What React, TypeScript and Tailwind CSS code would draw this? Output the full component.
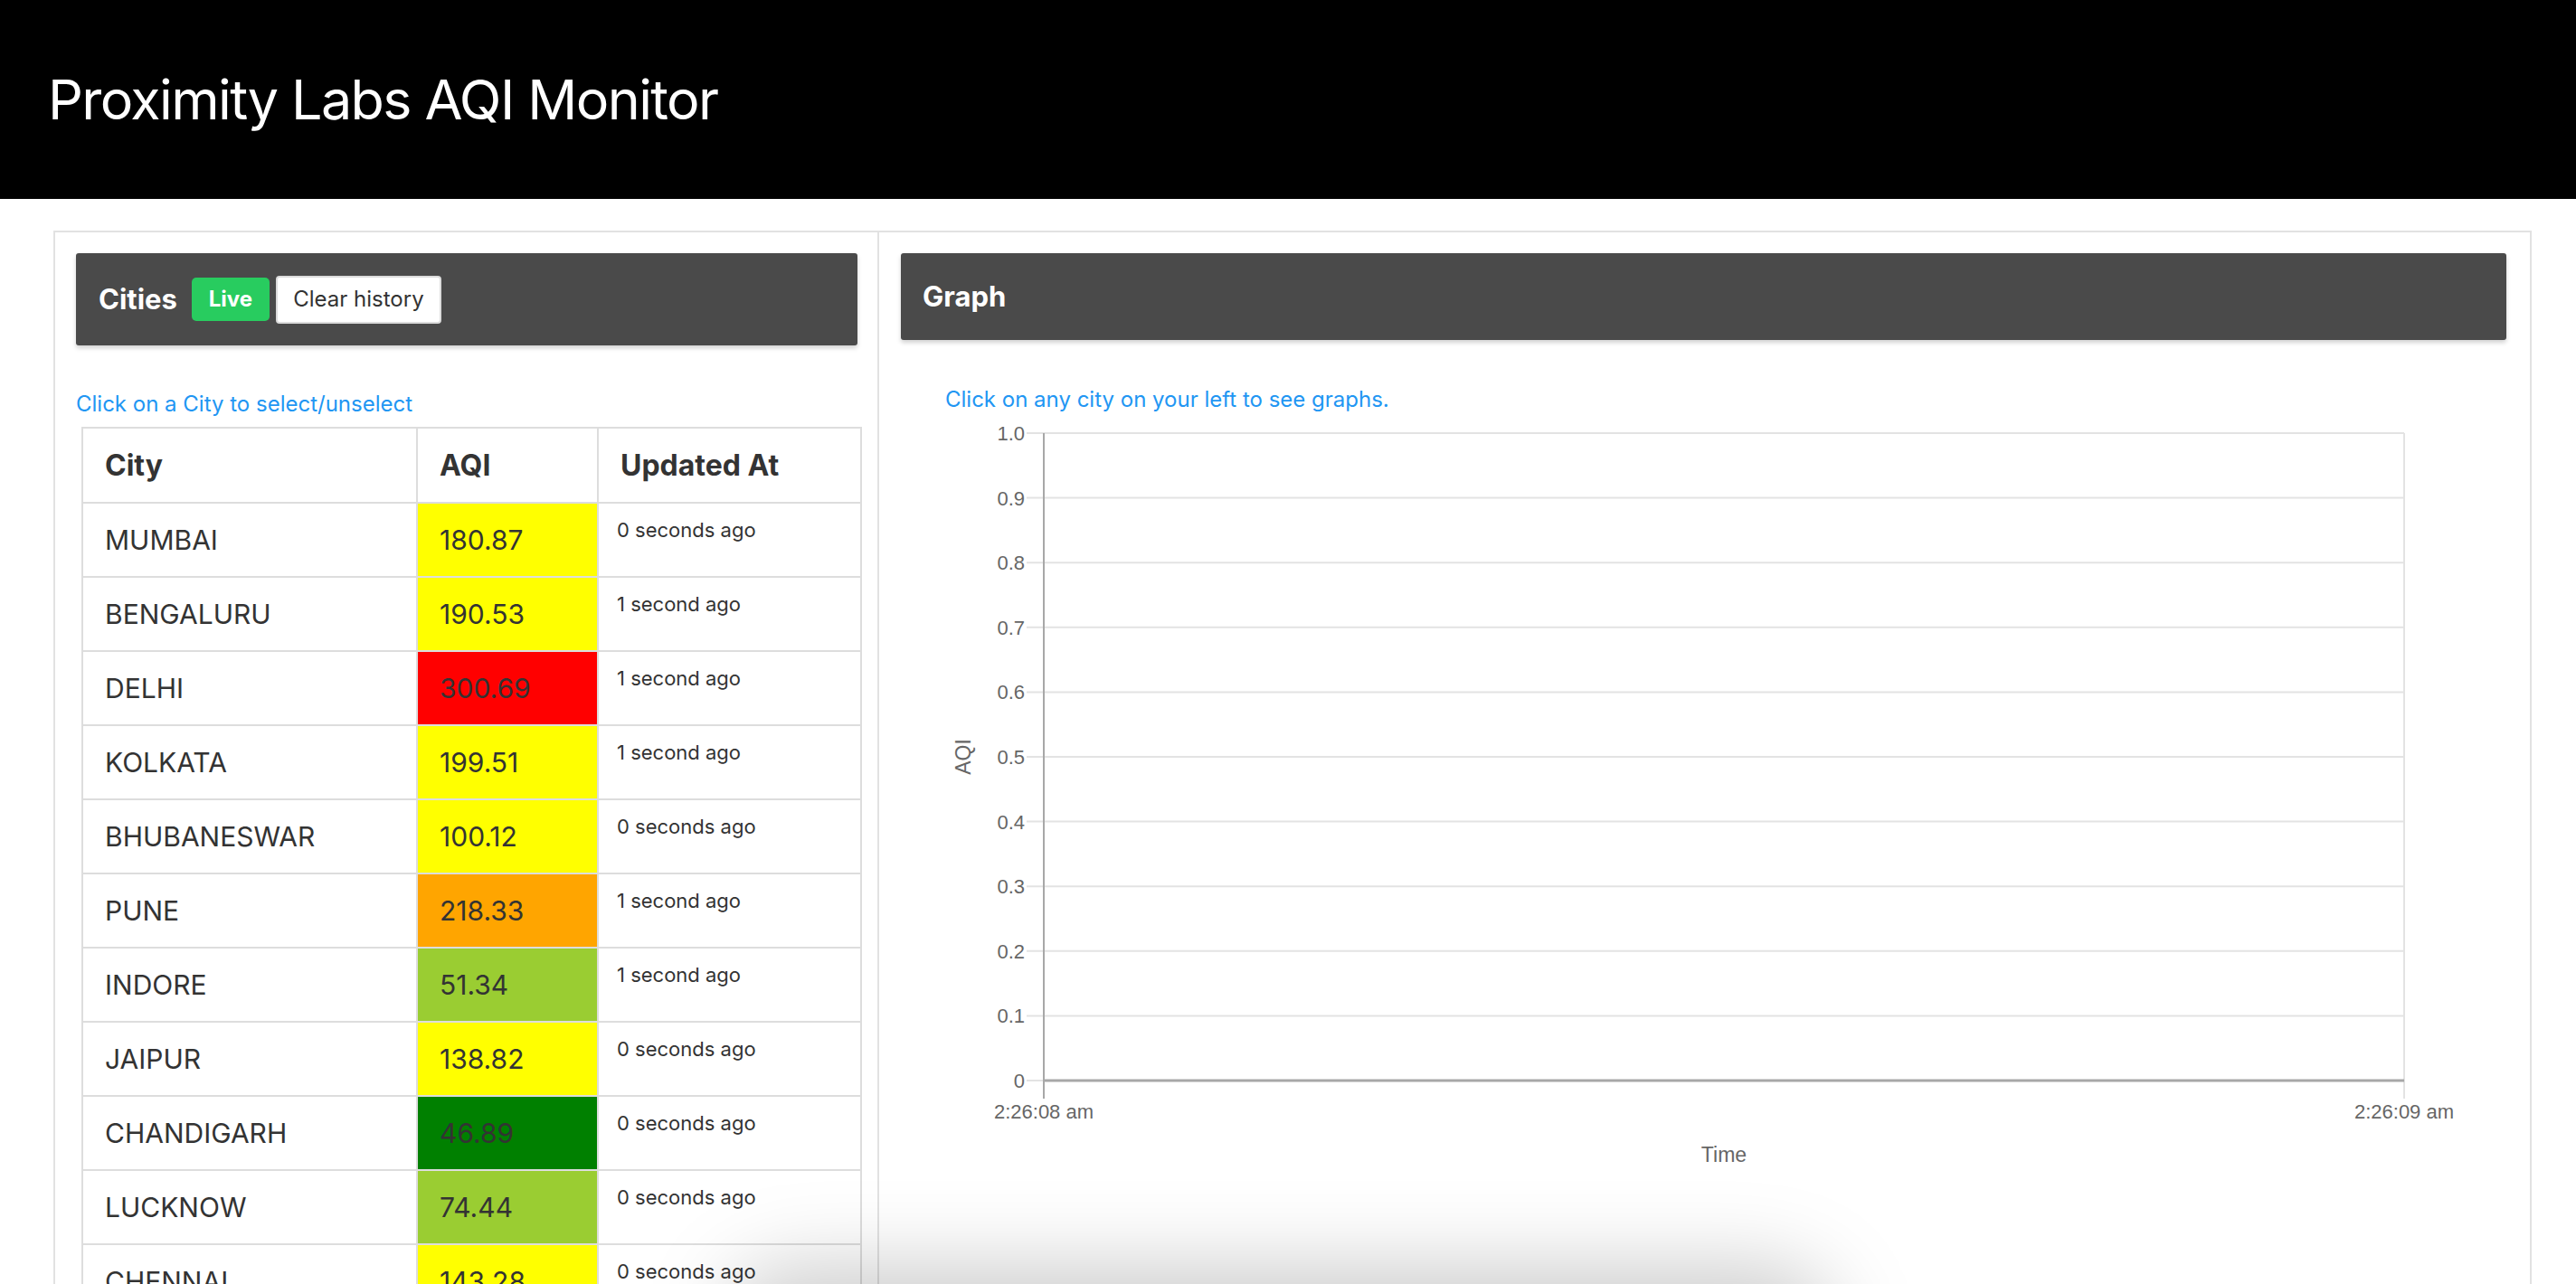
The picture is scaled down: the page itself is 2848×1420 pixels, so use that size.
import React from "react";

type Row = { city: string; aqi: string; bg: string; updated: string };

const rows: Row[] = [
  { city: "MUMBAI", aqi: "180.87", bg: "bg-[#ffff00]", updated: "0 seconds ago" },
  { city: "BENGALURU", aqi: "190.53", bg: "bg-[#ffff00]", updated: "1 second ago" },
  { city: "DELHI", aqi: "300.69", bg: "bg-[#ff0000]", updated: "1 second ago" },
  { city: "KOLKATA", aqi: "199.51", bg: "bg-[#ffff00]", updated: "1 second ago" },
  { city: "BHUBANESWAR", aqi: "100.12", bg: "bg-[#ffff00]", updated: "0 seconds ago" },
  { city: "PUNE", aqi: "218.33", bg: "bg-[#ffa500]", updated: "1 second ago" },
  { city: "INDORE", aqi: "51.34", bg: "bg-[#9acd32]", updated: "1 second ago" },
  { city: "JAIPUR", aqi: "138.82", bg: "bg-[#ffff00]", updated: "0 seconds ago" },
  { city: "CHANDIGARH", aqi: "46.89", bg: "bg-[#008000]", updated: "0 seconds ago" },
  { city: "LUCKNOW", aqi: "74.44", bg: "bg-[#9acd32]", updated: "0 seconds ago" },
  { city: "CHENNAI", aqi: "143.28", bg: "bg-[#ffff00]", updated: "0 seconds ago" },
  { city: "HYDERABAD", aqi: "201.12", bg: "bg-[#ffa500]", updated: "0 seconds ago" },
];

function Chart() {
  const left = 158;
  const right = 1662;
  const top = 9;
  const zero = 725;
  const step = (zero - top) / 10;
  const labels = ["1.0", "0.9", "0.8", "0.7", "0.6", "0.5", "0.4", "0.3", "0.2", "0.1", "0"];
  const font = '"Liberation Sans", Arial, sans-serif';
  return (
    <svg width={1775} height={830} className="block">
      {labels.map((l, i) => {
        const y = top + i * step;
        return (
          <g key={l}>
            <line
              x1={139}
              x2={i === 10 ? left : right}
              y1={y}
              y2={y}
              stroke="#e3e3e3"
              strokeWidth={2}
            />
            <text x={137} y={y + 8} textAnchor="end" fontSize={22} fill="#666" fontFamily={font}>
              {l}
            </text>
          </g>
        );
      })}
      <line x1={right} x2={right} y1={top} y2={745} stroke="#e3e3e3" strokeWidth={2} />
      <line x1={left} x2={right} y1={zero} y2={zero} stroke="#a8a8a8" strokeWidth={3} />
      <line x1={left} x2={left} y1={top} y2={745} stroke="#a8a8a8" strokeWidth={2} />
      <text x={left} y={767} textAnchor="middle" fontSize={22} fill="#666" fontFamily={font}>
        2:26:08 am
      </text>
      <text x={right} y={767} textAnchor="middle" fontSize={22} fill="#666" fontFamily={font}>
        2:26:09 am
      </text>
      <text x={910} y={815} textAnchor="middle" fontSize={23} fill="#666" fontFamily={font}>
        Time
      </text>
      <text
        x={77}
        y={367}
        textAnchor="middle"
        fontSize={23}
        fill="#666"
        fontFamily={font}
        transform="rotate(-90 77 367)"
      >
        AQI
      </text>
    </svg>
  );
}

export default function App() {
  return (
    <div className="relative min-h-[1420px] bg-white text-[#333] font-['Inter','Noto_Sans',sans-serif]">
      <header className="flex h-[220px] items-center bg-black pl-[53px]">
        <h1 className="text-[61px] font-normal leading-none tracking-[-1.6px] text-white">
          Proximity Labs AQI Monitor
        </h1>
      </header>

      <div className="ml-[59px] mt-[35px] flex w-[2740px] border-2 border-[#e2e2e2]">
        {/* Left column */}
        <div className="flex w-[911px] shrink-0 flex-col border-r-2 border-[#e2e2e2] pl-[23px] pr-[22px] pt-[23px]">
          <div className="flex h-[102px] items-center rounded-[3px] bg-[#4a4a4a] px-[25px] shadow-[0_3px_5px_rgba(0,0,0,0.18)]">
            <span className="text-[31px] font-bold text-white">Cities</span>
            <span className="ml-[16px] flex h-[48px] w-[86px] items-center justify-center rounded-[5px] bg-[#28cc5f] text-[24px] font-bold text-white">
              Live
            </span>
            <button className="ml-[7px] flex h-[53px] w-[183px] items-center justify-center rounded-[4px] border-2 border-[#dcdcdc] bg-white text-[24px] text-[#333]">
              Clear history
            </button>
          </div>

          <p className="mt-[47px] text-[24px] leading-[36px] text-[#2196f3]">
            Click on a City to select/unselect
          </p>

          <table className="ml-[6px] mt-[7px] w-[861px] table-fixed border-collapse">
            <thead>
              <tr className="h-[83px]">
                <th className="w-[370px] border-2 border-[#dddddd] px-[24px] text-left text-[32px] font-bold">City</th>
                <th className="w-[200px] border-2 border-[#dddddd] px-[24px] text-left text-[32px] font-bold">AQI</th>
                <th className="w-[291px] border-2 border-[#dddddd] px-[24px] text-left text-[32px] font-bold">Updated At</th>
              </tr>
            </thead>
            <tbody>
              {rows.map((r) => (
                <tr key={r.city} className="h-[82px]">
                  <td className="border-2 border-[#dddddd] px-[24px] text-[30px]">{r.city}</td>
                  <td className={`border-2 border-[#dddddd] px-[24px] text-[30px] ${r.bg}`}>{r.aqi}</td>
                  <td className="border-2 border-[#dddddd] px-[20px] pt-[16px] align-top text-[22px] leading-[27px]">
                    {r.updated}
                  </td>
                </tr>
              ))}
            </tbody>
          </table>
        </div>

        {/* Right column */}
        <div className="flex flex-1 flex-col pl-[24px] pr-[26px] pt-[23px]">
          <div className="flex h-[96px] items-center rounded-[3px] bg-[#4a4a4a] px-[24px] shadow-[0_3px_5px_rgba(0,0,0,0.18)]">
            <span className="text-[31px] font-bold text-white">Graph</span>
          </div>
          <p className="ml-[49px] mt-[48px] text-[24px] leading-[36px] text-[#2196f3]">
            Click on any city on your left to see graphs.
          </p>
          <div className="mt-[10px]">
            <Chart />
          </div>
        </div>
      </div>

      <div className="pointer-events-none absolute left-[800px] top-[1400px] z-10 h-[160px] w-[1230px] rounded-full bg-black/20 blur-[45px]" />
    </div>
  );
}
